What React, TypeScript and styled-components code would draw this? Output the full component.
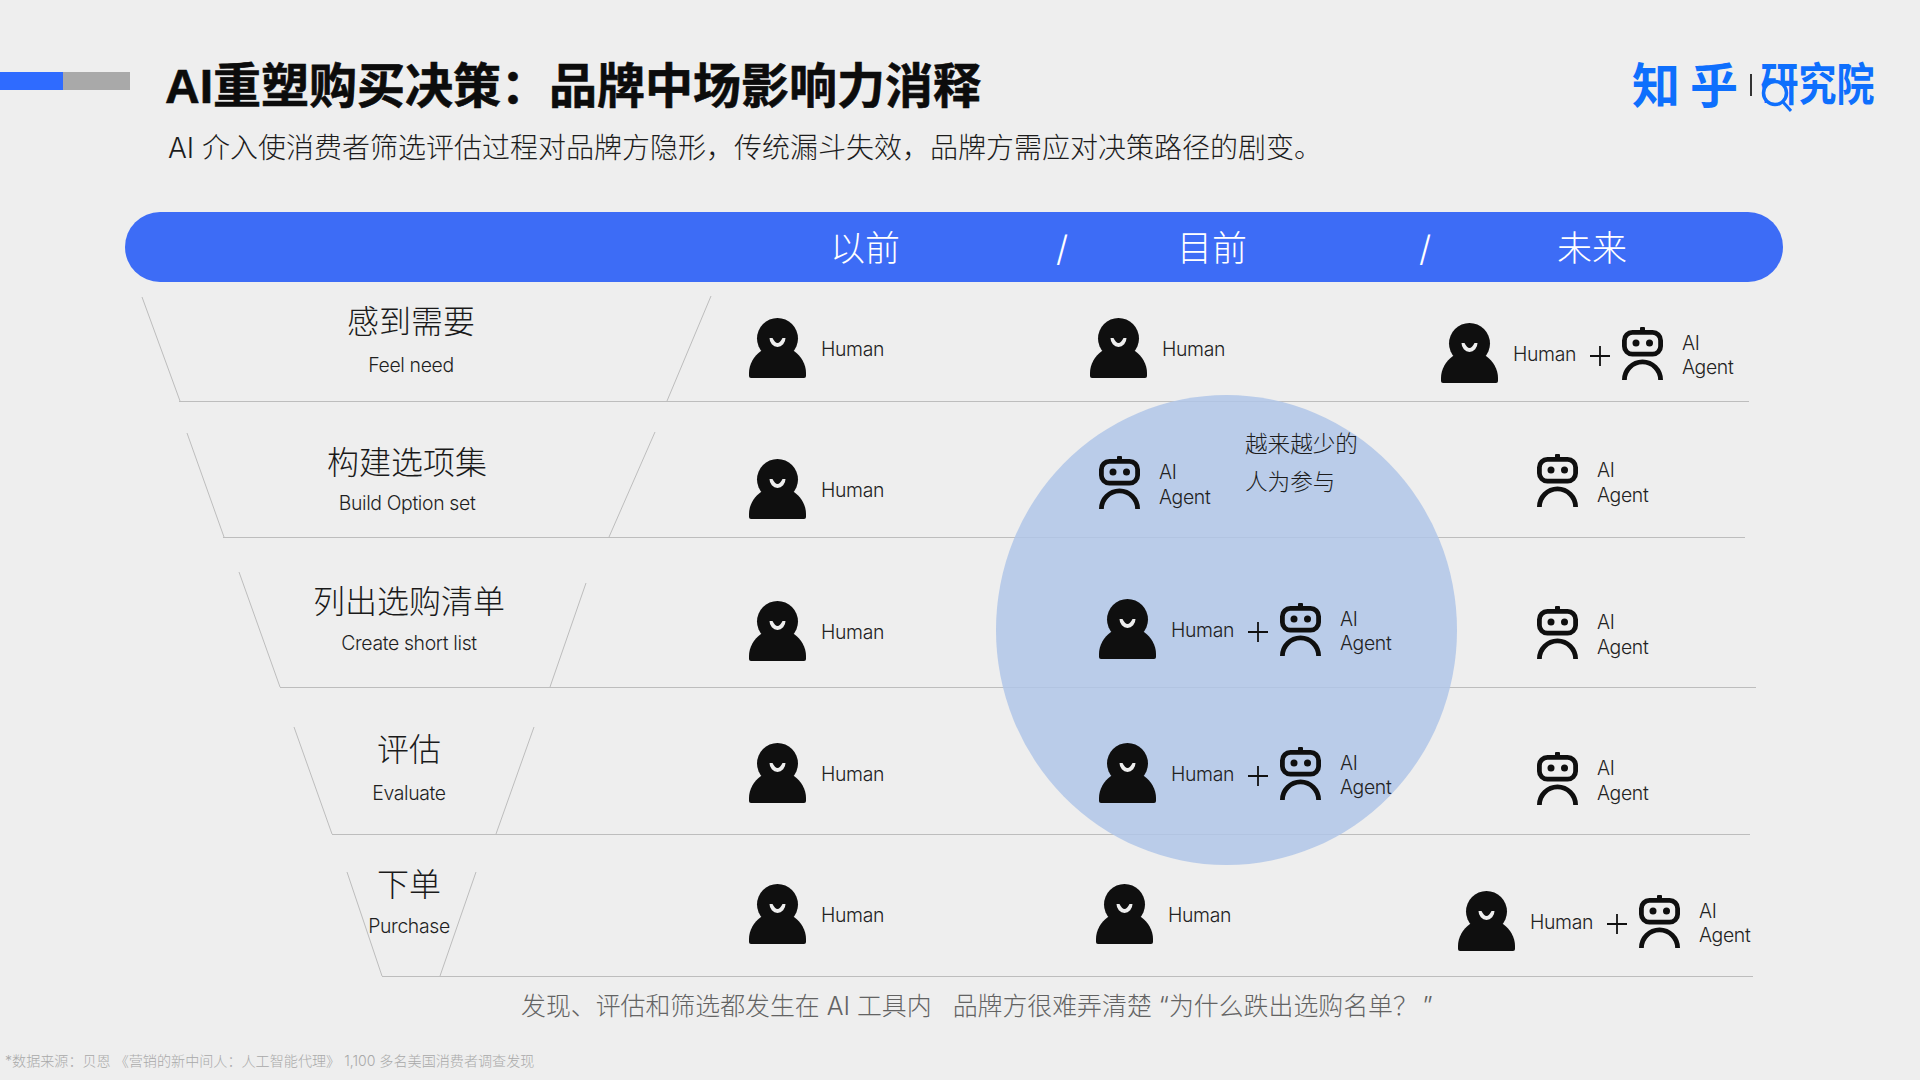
import React from "react";
import styled, { createGlobalStyle } from "styled-components";

const BOLD = `"Liberation Sans", "Noto Sans CJK SC", sans-serif`;
const LIGHT = `Inter, "Noto Sans CJK SC", sans-serif`;
const CJK = `"Noto Sans CJK SC", sans-serif`;

const Global = createGlobalStyle`
  html, body { margin: 0; padding: 0; background: #eeeeee; }
  body { font-family: ${LIGHT}; color: #1c1c1c; }
`;

const Page = styled.div`
  position: relative;
  width: 1920px;
  height: 1080px;
  overflow: hidden;
  background: #eeeeee;
  display: flex;
  flex-direction: column;
`;

const Header = styled.header`
  height: 212px;
  display: flex;
  align-items: flex-start;
`;
const Accent = styled.div`
  margin-top: 72px;
  width: 130px;
  height: 18px;
  flex: none;
  display: flex;
`;
const AccentPart = styled.span<{ $color: string; $w: number }>`
  width: ${(p) => p.$w}px;
  background: ${(p) => p.$color};
`;
const TitleBlock = styled.div`
  margin-left: 37px;
  padding-top: 57px;
`;
const Title = styled.h1`
  margin: 0 0 0 -2px;
  font: 700 48px/60px ${BOLD};
  color: #0c0c0c;
  white-space: nowrap;
  -webkit-text-stroke: 0.6px #0c0c0c;
`;
const Subtitle = styled.p`
  margin: 11px 0 0 1px;
  font: 300 28px/40px ${LIGHT};
  color: #1c1c1c;
  white-space: nowrap;
`;
const Logo = styled.div`
  position: absolute;
  left: 1632px;
  top: 51px;
  display: flex;
  align-items: center;
  color: #0e6ffd;
`;
const LogoZhihu = styled.span`
  font: 700 48px/62px ${CJK};
  letter-spacing: 10px;
`;
const LogoBar = styled.span`
  width: 1.5px;
  height: 22px;
  background: #333;
  margin: 6px 9px 0 2px;
`;
const LogoInstitute = styled.span`
  display: inline-block;
  font: 700 38px/62px ${CJK};
  transform: scaleY(1.2);
`;
const LogoLens = styled.svg`
  position: absolute;
  left: 128px;
  top: 27px;
`;

const Bar = styled.div`
  margin: 0 137px 0 125px;
  height: 70px;
  border-radius: 35px;
  background: #3d6cf6;
  display: flex;
  align-items: center;
  padding-top: 2.5px;
  box-sizing: border-box;
  color: #fff;
`;
const BarLabel = styled.span<{ $ml: number; $w: number }>`
  margin-left: ${(p) => p.$ml}px;
  width: ${(p) => p.$w}px;
  text-align: center;
  font: 300 35px/44px ${LIGHT};
  white-space: nowrap;
`;

const Row = styled.section`
  display: flex;
  flex-direction: column;
`;
const RowBody = styled.div<{ $h: number }>`
  height: ${(p) => p.$h}px;
  display: grid;
  grid-template-columns: 749px 341px 351px 1fr;
`;
const RowRule = styled.div<{ $left: number; $right: number }>`
  height: 1px;
  margin-left: ${(p) => p.$left}px;
  width: ${(p) => p.$right - p.$left}px;
  background: #bdbdbd;
`;
const Stage = styled.div<{ $cx: number; $top: number }>`
  position: relative;
  padding-left: ${(p) => 2 * p.$cx - 749}px;
  padding-top: ${(p) => p.$top}px;
  display: flex;
  flex-direction: column;
  align-items: center;
  box-sizing: border-box;
`;
const FunnelLines = styled.svg`
  position: absolute;
  left: 0;
  top: 0;
  overflow: visible;
`;
const StageName = styled.div`
  font: 300 32px/40px ${LIGHT};
  color: #1a1a1a;
  white-space: nowrap;
`;
const StageEnglish = styled.div<{ $gap: number }>`
  margin-top: ${(p) => p.$gap}px;
  padding-top: 1px;
  font: 300 19.4px/24px ${LIGHT};
  letter-spacing: -0.35px;
  color: #1f1f1f;
  white-space: nowrap;
`;
const Cell = styled.div<{ $left: number; $top: number }>`
  position: relative;
  z-index: 2;
  padding-left: ${(p) => p.$left}px;
  padding-top: ${(p) => p.$top}px;
  display: flex;
  align-items: flex-start;
`;
const Group = styled.div`
  display: flex;
  align-items: center;
`;
const HumanLabel = styled.span`
  margin-left: 15px;
  margin-top: 1.5px;
  width: 63px;
  font: 300 19.4px/24px ${LIGHT};
  letter-spacing: -0.35px;
  color: #222;
  white-space: nowrap;
`;
const Plus = styled.svg`
  margin: 6px 12px 0 14px;
  flex: none;
`;
const AgentLabel = styled.span`
  margin-left: 19px;
  margin-top: 4px;
  width: 52px;
  font: 300 19.4px/24.5px ${LIGHT};
  letter-spacing: -0.35px;
  color: #222;
`;
const Note = styled.div`
  align-self: flex-start;
  margin: -31px 0 0 34px;
  font: 300 22.6px/38px ${LIGHT};
  color: #1c1c1c;
  white-space: nowrap;
`;
const Spotlight = styled.div`
  position: absolute;
  z-index: 1;
  left: 996px;
  top: 395px;
  width: 461px;
  height: 470px;
  border-radius: 50%;
  background: rgba(176, 197, 231, 0.85);
`;
const Caption = styled.p`
  margin: 12px 0 0 521px;
  font: 300 24.9px/34px ${LIGHT};
  color: #636363;
  white-space: pre;
`;
const Source = styled.p`
  margin: 28px 0 0 5px;
  font: 300 14.1px/20px ${LIGHT};
  color: #a9a9a9;
  white-space: pre;
`;

const HumanIcon = () => (
  <svg width="57" height="60" viewBox="0 0 57 60" style={{ flex: "none" }}>
    <circle cx="28.5" cy="20.5" r="20.5" fill="#0f0f0f" />
    <path d="M0 55C0 46 5 38 12 33L45 33C52 38 57 46 57 55V58A2 2 0 0 1 55 60H2A2 2 0 0 1 0 58Z" fill="#0f0f0f" />
    <path d="M20.5 20A8 9 0 0 0 36.5 20H33.5Q28.5 30 23.5 20Z" fill="#eeeeee" />
  </svg>
);
const RobotIcon = () => (
  <svg width="41" height="53" viewBox="0 0 41 53" style={{ flex: "none" }}>
    <rect x="18" y="0" width="5" height="4" rx="1" fill="#0f0f0f" />
    <rect x="2.4" y="5.4" width="36.2" height="21.8" rx="8" fill="none" stroke="#0f0f0f" strokeWidth="4.8" />
    <circle cx="14" cy="16" r="3.5" fill="#0f0f0f" />
    <circle cx="27.5" cy="16" r="3.5" fill="#0f0f0f" />
    <path d="M2.4 53A18.1 18.1 0 0 1 38.6 53" fill="none" stroke="#0f0f0f" strokeWidth="4.8" />
  </svg>
);
const PlusIcon = () => (
  <Plus width="20" height="20" viewBox="0 0 20 20">
    <path d="M0 10H20M10 0V20" stroke="#111" strokeWidth="1.8" />
  </Plus>
);

const Human = () => (
  <>
    <HumanIcon />
    <HumanLabel>Human</HumanLabel>
  </>
);
const Agent = () => (
  <>
    <RobotIcon />
    <AgentLabel>
      AI
      <br />
      Agent
    </AgentLabel>
  </>
);
const Both = () => (
  <>
    <Human />
    <PlusIcon />
    <Agent />
  </>
);

type Content = "human" | "agent" | "both" | "note";
type CellData = { kind: Content; left: number; top: number };
type RowData = {
  h: number;
  rule: [number, number];
  name: string;
  en: string;
  cx: number;
  top: number;
  gap: number;
  funnel: string;
  cells: CellData[];
};

const rows: RowData[] = [
  {
    h: 119, rule: [179, 1749], name: "感到需要", en: "Feel need", cx: 411, top: 20, gap: 10,
    funnel: "M142 15L180 119M711 14L667 119",
    cells: [
      { kind: "human", left: 0, top: 36 },
      { kind: "human", left: 0, top: 36 },
      { kind: "both", left: 0, top: 41 },
    ],
  },
  {
    h: 135, rule: [223, 1745], name: "构建选项集", en: "Build Option set", cx: 407, top: 41, gap: 7,
    funnel: "M187 31L224 135M655 30L609 135",
    cells: [
      { kind: "human", left: 0, top: 57 },
      { kind: "note", left: 9, top: 54 },
      { kind: "agent", left: 96, top: 52 },
    ],
  },
  {
    h: 149, rule: [280, 1756], name: "列出选购清单", en: "Create short list", cx: 409, top: 44, gap: 8,
    funnel: "M239 34L280 149M586 45L550 149",
    cells: [
      { kind: "human", left: 0, top: 63 },
      { kind: "both", left: 9, top: 61 },
      { kind: "agent", left: 96, top: 68 },
    ],
  },
  {
    h: 146, rule: [332, 1750], name: "评估", en: "Evaluate", cx: 409, top: 42, gap: 10,
    funnel: "M294 39L332 146M534 39L496 146",
    cells: [
      { kind: "human", left: 0, top: 55 },
      { kind: "both", left: 9, top: 55 },
      { kind: "agent", left: 96, top: 64 },
    ],
  },
  {
    h: 141, rule: [382, 1753], name: "下单", en: "Purchase", cx: 409, top: 30, gap: 8,
    funnel: "M347 37L382 141M476 37L440 141",
    cells: [
      { kind: "human", left: 0, top: 49 },
      { kind: "human", left: 6, top: 49 },
      { kind: "both", left: 17, top: 56 },
    ],
  },
];

const renderContent = (kind: Content) => {
  if (kind === "human") return <Human />;
  if (kind === "agent") return <Agent />;
  if (kind === "both") return <Both />;
  return (
    <>
      <Agent />
      <Note>
        越来越少的
        <br />
        人为参与
      </Note>
    </>
  );
};

export default function App() {
  return (
    <Page>
      <Global />
      <Header>
        <Accent>
          <AccentPart $color="#2f6bff" $w={63} />
          <AccentPart $color="#a9a9a9" $w={67} />
        </Accent>
        <TitleBlock>
          <Title>AI重塑购买决策：品牌中场影响力消释</Title>
          <Subtitle>AI 介入使消费者筛选评估过程对品牌方隐形，传统漏斗失效，品牌方需应对决策路径的剧变。</Subtitle>
        </TitleBlock>
        <Logo>
          <LogoZhihu>知乎</LogoZhihu>
          <LogoBar />
          <LogoInstitute>研究院</LogoInstitute>
          <LogoLens width="32" height="36" viewBox="0 0 32 36">
            <circle cx="15" cy="15" r="11.5" fill="#eeeeee" stroke="#0e6ffd" strokeWidth="3.5" />
            <path d="M23 24L31 33" stroke="#0e6ffd" strokeWidth="3" />
          </LogoLens>
        </Logo>
      </Header>
      <Bar>
        <BarLabel $ml={705} $w={70}>以前</BarLabel>
        <BarLabel $ml={152} $w={20}>/</BarLabel>
        <BarLabel $ml={105} $w={70}>目前</BarLabel>
        <BarLabel $ml={168} $w={20}>/</BarLabel>
        <BarLabel $ml={122} $w={70}>未来</BarLabel>
      </Bar>
      {rows.map((r) => (
        <Row key={r.name}>
          <RowBody $h={r.h}>
            <Stage $cx={r.cx} $top={r.top}>
              <FunnelLines width="749" height={r.h} viewBox={`0 0 749 ${r.h}`}>
                <path d={r.funnel} fill="none" stroke="#bdbdbd" strokeWidth="1" />
              </FunnelLines>
              <StageName>{r.name}</StageName>
              <StageEnglish $gap={r.gap}>{r.en}</StageEnglish>
            </Stage>
            {r.cells.map((c, i) => (
              <Cell key={i} $left={c.left} $top={c.top}>
                <Group>{renderContent(c.kind)}</Group>
              </Cell>
            ))}
          </RowBody>
          <RowRule $left={r.rule[0]} $right={r.rule[1]} />
        </Row>
      ))}
      <Spotlight />
      <Caption>发现、评估和筛选都发生在 AI 工具内   品牌方很难弄清楚 “为什么跌出选购名单？{"\u2009"}”</Caption>
      <Source>*数据来源：贝恩 《营销的新中间人：人工智能代理》 1,100 多名美国消费者调查发现</Source>
    </Page>
  );
}
